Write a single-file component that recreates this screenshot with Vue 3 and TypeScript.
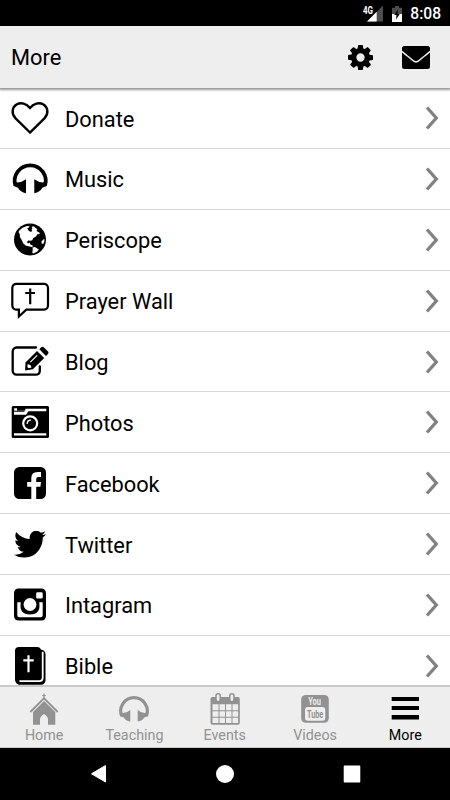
<script setup lang="ts">
type IconName =
  | 'heart' | 'headphones' | 'globe' | 'prayer' | 'blog'
  | 'camera' | 'facebook' | 'twitter' | 'instagram' | 'bible'

interface MenuItem {
  label: string
  icon: IconName
}

interface Tab {
  label: string
  icon: 'home' | 'teaching' | 'events' | 'videos' | 'more'
  active?: boolean
}

const items: MenuItem[] = [
  { label: 'Donate', icon: 'heart' },
  { label: 'Music', icon: 'headphones' },
  { label: 'Periscope', icon: 'globe' },
  { label: 'Prayer Wall', icon: 'prayer' },
  { label: 'Blog', icon: 'blog' },
  { label: 'Photos', icon: 'camera' },
  { label: 'Facebook', icon: 'facebook' },
  { label: 'Twitter', icon: 'twitter' },
  { label: 'Intagram', icon: 'instagram' },
  { label: 'Bible', icon: 'bible' },
]

const tabs: Tab[] = [
  { label: 'Home', icon: 'home' },
  { label: 'Teaching', icon: 'teaching' },
  { label: 'Events', icon: 'events' },
  { label: 'Videos', icon: 'videos' },
  { label: 'More', icon: 'more', active: true },
]
</script>

<template>
  <div class="screen">
    <div class="status">
      <svg class="signal" viewBox="0 0 22 18">
        <text x="0" y="9.500" textLength="10" lengthAdjust="spacingAndGlyphs" class="net">4G</text>
        <path d="M20 1.500V17.500H4z" fill="#4d4d4d" />
        <path d="M13.700 7.800V17.500H4z" fill="#fff" />
      </svg>
      <svg class="battery" viewBox="0 0 10 16">
        <path d="M3 0h4v1.700h3V8H0V1.700h3z" fill="#4d4d4d" />
        <path d="M0 8h10v8H0z" fill="#fff" />
        <path d="M6 3.500L2.200 9h2.300L4 13.500L7.800 8H5.500z" fill="#000" />
      </svg>
      <span class="clock">8:08</span>
    </div>

    <header class="header">
      <h1>More</h1>
      <svg class="cog" viewBox="128 128 1536 1536">
        <path d="M1152 896q0-106-75-181t-181-75-181 75-75 181 75 181 181 75 181-75 75-181zm512-109v222q0 12-8 23t-20 13l-185 28q-19 54-39 91 35 50 107 138 10 12 10 25t-9 23q-27 37-99 108t-94 71q-12 0-26-9l-138-108q-44 23-91 38-16 136-29 186-7 28-36 28h-222q-14 0-24.500-8.500t-11.500-21.500l-28-184q-49-16-90-37l-141 107q-10 9-25 9-14 0-25-11-126-114-165-168-7-10-7-23 0-12 8-23 15-21 51-66.500t54-70.500q-27-50-41-99l-183-27q-13-2-21-12.500t-8-23.500v-222q0-12 8-23t19-13l186-28q14-46 39-92-40-57-107-138-10-12-10-24 0-10 9-23 26-36 98.500-107.500t94.500-71.500q13 0 26 10l138 107q44-23 91-38 16-136 29-186 7-28 36-28h222q14 0 24.500 8.500t11.500 21.500l28 184q49 16 90 37l142-107q9-9 24-9 13 0 25 10 129 119 165 170 7 8 7 22 0 12-8 23-15 21-51 66.500t-54 70.500q26 50 41 98l183 28q13 2 21 12.500t8 23.500z" />
      </svg>
      <svg class="mail" viewBox="0 0 28 23">
        <path d="M2.500 0h23A2.500 2.500 0 0 1 28 2.500v1.900c-4 3.700-8 6.500-11.500 9.600q-2.500 2-5 0C8 10.900 4 8.100 0 4.400V2.500A2.500 2.500 0 0 1 2.500 0z" />
        <path d="M0 6.500C4 9.800 7.500 12.500 11 15.600q3 2.200 6 0C20.500 12.500 24 9.800 28 6.500V20.500a2.500 2.500 0 0 1-2.500 2.500h-23A2.500 2.500 0 0 1 0 20.500z" />
      </svg>
    </header>

    <main class="list">
      <div v-for="item in items" :key="item.label" class="row">
        <svg class="icon" viewBox="0 0 40 40">
          <path
            v-if="item.icon === 'heart'"
            d="M20 33.500L5.600 19.300C0.800 14.300 2.300 8.200 6.500 5.500C11 3 16.500 4.400 20 8.900C23.500 4.400 29 3 33.500 5.500C37.700 8.200 39.200 14.300 34.400 19.300z"
            fill="none" stroke="#000" stroke-width="2.400"
          />
          <g v-else-if="item.icon === 'headphones'">
            <path d="M5.400 26.500A15.500 15.500 0 1 1 35 26.500" fill="none" stroke="#000" stroke-width="3.800" />
            <path d="M16 20.300V34.200Q10.300 33.300 8 28.800L3.600 27.100L5.500 22.800L7.500 23.400Q12 23.400 16 20.300zM24.300 20.300V34.200Q30 33.300 32.300 28.800L36.700 27.100L34.800 22.800L32.800 23.400Q28.300 23.400 24.300 20.300z" />
          </g>
          <g v-else-if="item.icon === 'globe'">
            <circle cx="20" cy="19.500" r="16" />
            <path d="M9.300 10.500L12.500 7.800L17 6L19.500 6.300L19 7.600L16.800 8.500L18 10.500L20.500 11.800L22.300 11.300L21.500 9.500L22.500 8.300L21.500 7L23.500 6.300L27.300 9.300L26.500 11L29.300 12.500L29.800 14L27.300 14.300L26 16.500L23.300 18L22.300 20.300L20.300 20.700L18.300 20.500L17 22L18 23.500L20.200 22.600L20 24.300L22.700 25.500L22.500 27.300L19.700 26.400L16 25.700L13.300 23.500L11.700 20L10 17.300L9.700 14L8.500 12z" fill="#fff" />
            <path d="M12.500 11L17.500 8.500L19.500 12.500L23.500 13L22 18L17 20.500L14.500 23L11.500 17z" fill="#fff" />
            <path d="M22.600 27.400L25 27L28.800 29.500L27.300 31.500L23.500 33.500L22.300 33L22.700 30z" fill="#fff" />
            <path d="M33.300 19.500L34.500 19L34.300 21.500L33.300 24L31.700 23.500L31.500 21.500z" fill="#fff" />
          </g>
          <g v-else-if="item.icon === 'prayer'" fill="none" stroke="#000" stroke-width="2.200">
            <path d="M6.300 2.900H34A4 4 0 0 1 38 6.900V24.600A4 4 0 0 1 34 28.600H16.300L8.900 35.500V28.600H6.300A4 4 0 0 1 2.300 24.600V6.900A4 4 0 0 1 6.300 2.900z" />
            <path d="M20.200 7.500V23.300M15.300 12H25" stroke-width="2.200" />
          </g>
          <g v-else-if="item.icon === 'blog'">
            <path d="M26 5.500H6.500A4 4 0 0 0 2.700 9.600V28.700A4 4 0 0 0 6.500 32.700H25.500Q29.800 32.700 29.800 28.700V24.500" fill="none" stroke="#000" stroke-width="2.300" stroke-linecap="round" />
            <path d="M15.100 28.400L15.500 20.400L27 8.900L34.200 16L22.900 27.200z" />
            <path d="M29.300 7.200L31.200 5.300Q32.500 4.200 33.700 5.300L38 9.500Q39.100 10.700 38 11.900L36 13.900z" />
            <path d="M20.300 20.200L27.200 13.300" stroke="#fff" stroke-width="1.200" />
            <path d="M17.700 22L17.300 25L18.700 26.300L21.500 25.500L20.500 23L18.500 22.500z" fill="#fff" />
          </g>
          <g v-else-if="item.icon === 'camera'">
            <rect x="1.700" y="3" width="37.300" height="32" rx="1.500" />
            <path d="M4 8.700V11.700H16L18.500 8.300H36.300V5.700H15.300V7.600H7V5.300H4.200V7.700H14.500V8.700zM4 30.300H36.300V32.500H4z" fill="#fff" />
            <circle cx="20.200" cy="20.300" r="7" fill="none" stroke="#fff" stroke-width="2.200" />
            <path d="M17.200 21Q17 17.200 20.800 17" fill="none" stroke="#fff" stroke-width="1.300" />
          </g>
          <g v-else-if="item.icon === 'facebook'">
            <rect x="4" y="3" width="32" height="32" rx="5.500" />
            <path d="M21.300 35V22.800H17.200V17.900H21.300V14.300Q21.300 8 27.600 8H31V12.900H28.500Q26.200 12.900 26.200 15.200V17.900H31L30.400 22.800H26.200V35z" fill="#fff" />
          </g>
          <svg v-else-if="item.icon === 'twitter'" x="4" y="5.700" width="32" height="27" viewBox="108 256 1576 1280" preserveAspectRatio="none">
            <path d="M1684 408q-67 98-162 167 1 14 1 42 0 130-38 259.500t-115.500 248.500-184.500 210.500-258 146-323 54.500q-271 0-496-145 35 4 78 4 225 0 401-138-105-2-188-64.500t-114-159.500q33 5 61 5 43 0 85-11-112-23-185.500-111.500t-73.500-205.500v-4q68 38 146 41-66-44-105-115t-39-154q0-88 44-163 121 149 294.500 238.500t371.500 99.500q-8-38-8-74 0-134 94.500-228.500t228.500-94.500q140 0 236 102 109-21 205-78-37 115-142 178 93-10 186-50z" />
          </svg>
          <g v-else-if="item.icon === 'instagram'" transform="translate(0 .5)">
            <rect x="4" y="3" width="32" height="32" rx="4.500" />
            <path d="M7.300 16.700H10.800Q8.800 29 20 29Q31.200 29 29.200 16.700H32.700V29.800Q32.700 31.800 30.700 31.800H9.300Q7.300 31.800 7.300 29.800z" fill="#fff" />
            <circle cx="20" cy="19" r="6.400" fill="#fff" />
            <rect x="26.200" y="6.700" width="6.500" height="6.300" rx="1.300" fill="#fff" />
          </g>
          <g v-else transform="translate(0 .8)">
            <rect x="5.500" y="3" width="30" height="35" rx="4.500" />
            <path d="M9 34.300H29.500Q32.700 34.300 32.700 31V5" fill="none" stroke="#fff" stroke-width="1.800" />
            <rect x="5" y="0.300" width="26" height="32.300" rx="4" />
            <path d="M5 20V32Q5 37.500 10 37.800L9.500 34.800L9 31z" />
            <path d="M18.500 8.500V25.500M13.300 13.500H23.700" stroke="#fff" stroke-width="2.200" />
          </g>
        </svg>
        <span class="label">{{ item.label }}</span>
        <svg class="chevron" viewBox="0 0 14 24">
          <path d="M2 1.500L11.300 12L2 22.500" fill="none" stroke="#828282" stroke-width="3.300" />
        </svg>
      </div>
    </main>

    <nav class="tabs">
      <div v-for="tab in tabs" :key="tab.label" class="tab" :class="{ active: tab.active }">
        <svg class="tab-icon" viewBox="0 0 32 34">
          <g v-if="tab.icon === 'home'">
            <path d="M16 1.500V7M14.300 3.500H17.700" stroke="currentColor" stroke-width="1.200" />
            <path d="M2.300 20L16 6.300L29.700 20" fill="none" stroke="currentColor" stroke-width="1.800" />
            <path d="M16 9L27.300 20V32.700H20V26.500Q19.300 23.500 16 22Q12.700 23.500 12 26.500V32.700H5V20z" />
          </g>
          <g v-else-if="tab.icon === 'teaching'">
            <path d="M3.700 24A13.300 13.300 0 1 1 28.300 24" fill="none" stroke="currentColor" stroke-width="3.200" />
            <path d="M12.300 18V29.600Q7.500 28.800 5.800 25.500L2.100 24.200L3.800 20.500L5.300 20.900Q9 20.900 12.300 18zM19.700 18V29.600Q24.500 28.800 26.200 25.500L29.900 24.200L28.200 20.500L26.700 20.900Q23 20.900 19.700 18z" />
          </g>
          <g v-else-if="tab.icon === 'events'">
            <rect x="1.500" y="5" width="29.300" height="27.700" rx="2" />
            <path d="M3.500 12.300h6v6h-6zM10.500 12.300h5.500v6h-5.500zM17 12.300h5.500v6H17zM23.500 12.300h5.600v6h-5.600zM3.500 19.300h6v5.400h-6zM10.500 19.300h5.500v5.400h-5.500zM17 19.300h5.500v5.400H17zM23.500 19.300h5.600v5.400h-5.600zM3.500 25.700h6v5.300h-6zM10.500 25.700h5.500v5.300h-5.500zM17 25.700h5.500v5.300H17zM23.500 25.700h5.600v5.300h-5.600z" fill="#eee" />
            <rect x="7" y="1.700" width="4.200" height="8" rx="2.100" stroke="currentColor" fill="#eee" stroke-width="1.500" />
            <rect x="20.800" y="1.700" width="4.200" height="8" rx="2.100" stroke="currentColor" fill="#eee" stroke-width="1.500" />
          </g>
          <g v-else-if="tab.icon === 'videos'">
            <rect x="2.200" y="3" width="27.600" height="27.700" rx="4.500" />
            <rect x="6" y="15" width="20.300" height="13.700" rx="3" fill="#eee" />
            <text x="9.200" y="13.200" textLength="12.800" lengthAdjust="spacingAndGlyphs" class="you">You</text>
            <text x="8" y="26" textLength="16.300" lengthAdjust="spacingAndGlyphs" class="tube">Tube</text>
          </g>
          <path v-else d="M2.700 5h27.300v4H2.700zM2.700 14h27.300v4H2.700zM2.700 23h27.300v4.500H2.700z" />
        </svg>
        <span>{{ tab.label }}</span>
      </div>
    </nav>

    <div class="system">
      <svg viewBox="0 0 18 20"><path d="M15.500 1.500V18L1.500 9.800z" fill="#fff" stroke="#fff" stroke-linejoin="round" /></svg>
      <svg viewBox="0 0 18 20"><circle cx="9" cy="10" r="9" fill="#fff" /></svg>
      <svg viewBox="0 0 18 20"><rect x=".7" y="1.500" width="16.600" height="17" rx="1" fill="#fff" /></svg>
    </div>
  </div>
</template>

<style>
body {
  margin: 0;
}
</style>

<style scoped>
.screen {
  display: flex;
  flex-direction: column;
  width: 450px;
  height: 800px;
  overflow: hidden;
  background: #fff;
  color: #000;
  font-family: Roboto, "Liberation Sans", sans-serif;
}
svg {
  display: block;
  flex: none;
}
.status {
  display: flex;
  align-items: center;
  justify-content: flex-end;
  flex: none;
  height: 26px;
  box-sizing: border-box;
  padding: 1px 9px 0 0;
  background: #000;
}
.signal {
  width: 22px;
  height: 18px;
  overflow: visible;
  margin-bottom: 1px;
}
.net {
  fill: #fff;
  font-size: 10px;
  font-weight: 700;
}
.battery {
  width: 10px;
  height: 16px;
  margin: 0 8px 0 7px;
}
.clock {
  color: #fff;
  font-size: 15.6px;
  font-weight: 500;
  line-height: 24px;
  padding-top: 1px;
}
.header {
  display: flex;
  align-items: center;
  flex: none;
  height: 62px;
  box-sizing: border-box;
  padding: 0 20px 0 11px;
  background: #eee;
  box-shadow: 0 1px 2px 1px rgba(0, 0, 0, 0.4);
  z-index: 1;
}
h1 {
  flex: 1;
  margin: 1px 0 0;
  font-size: 21.8px;
  line-height: 30px;
  font-weight: 400;
}
.cog {
  width: 25px;
  height: 25px;
  margin-right: 29px;
}
.mail {
  width: 28px;
  height: 23px;
}
.list {
  flex: 1;
  min-height: 0;
  overflow: hidden;
  padding-top: 0.2px;
}
.row {
  display: flex;
  align-items: center;
  height: 60.87px;
  box-sizing: border-box;
  padding: 1px 11px 0 10px;
  border-bottom: 1px solid #d6d6d6;
}
.icon {
  width: 40px;
  height: 40px;
}
.label {
  flex: 1;
  margin-left: 15px;
  padding-top: 2px;
  font-size: 21.8px;
  line-height: 30px;
}
.chevron {
  width: 14px;
  height: 24px;
  margin-bottom: 1px;
}
.tabs {
  display: grid;
  grid-template-columns: repeat(5, 90.3px);
  flex: none;
  width: 450px;
  height: 63px;
  box-sizing: border-box;
  border-top: 2px solid #c9c9c9;
  border-bottom: 1px solid #ccc;
  background: #eee;
}
.tab {
  display: flex;
  flex-direction: column;
  align-items: center;
  padding: 5px 1px 0 0;
  margin-left: -1px;
  color: #929292;
  font-size: 14.300px;
  line-height: 18px;
}
.active {
  color: #000;
}
.tab-icon {
  width: 32px;
  height: 34px;
  fill: currentColor;
}
.you,
.tube {
  font-weight: 700;
}
.you {
  fill: #eee;
  font-size: 11px;
}
.tube {
  font-size: 11px;
}
.system {
  display: flex;
  align-items: center;
  justify-content: center;
  gap: 108.500px;
  flex: none;
  height: 52px;
  background: #000;
}
.system svg {
  width: 18px;
  height: 20px;
}
</style>
